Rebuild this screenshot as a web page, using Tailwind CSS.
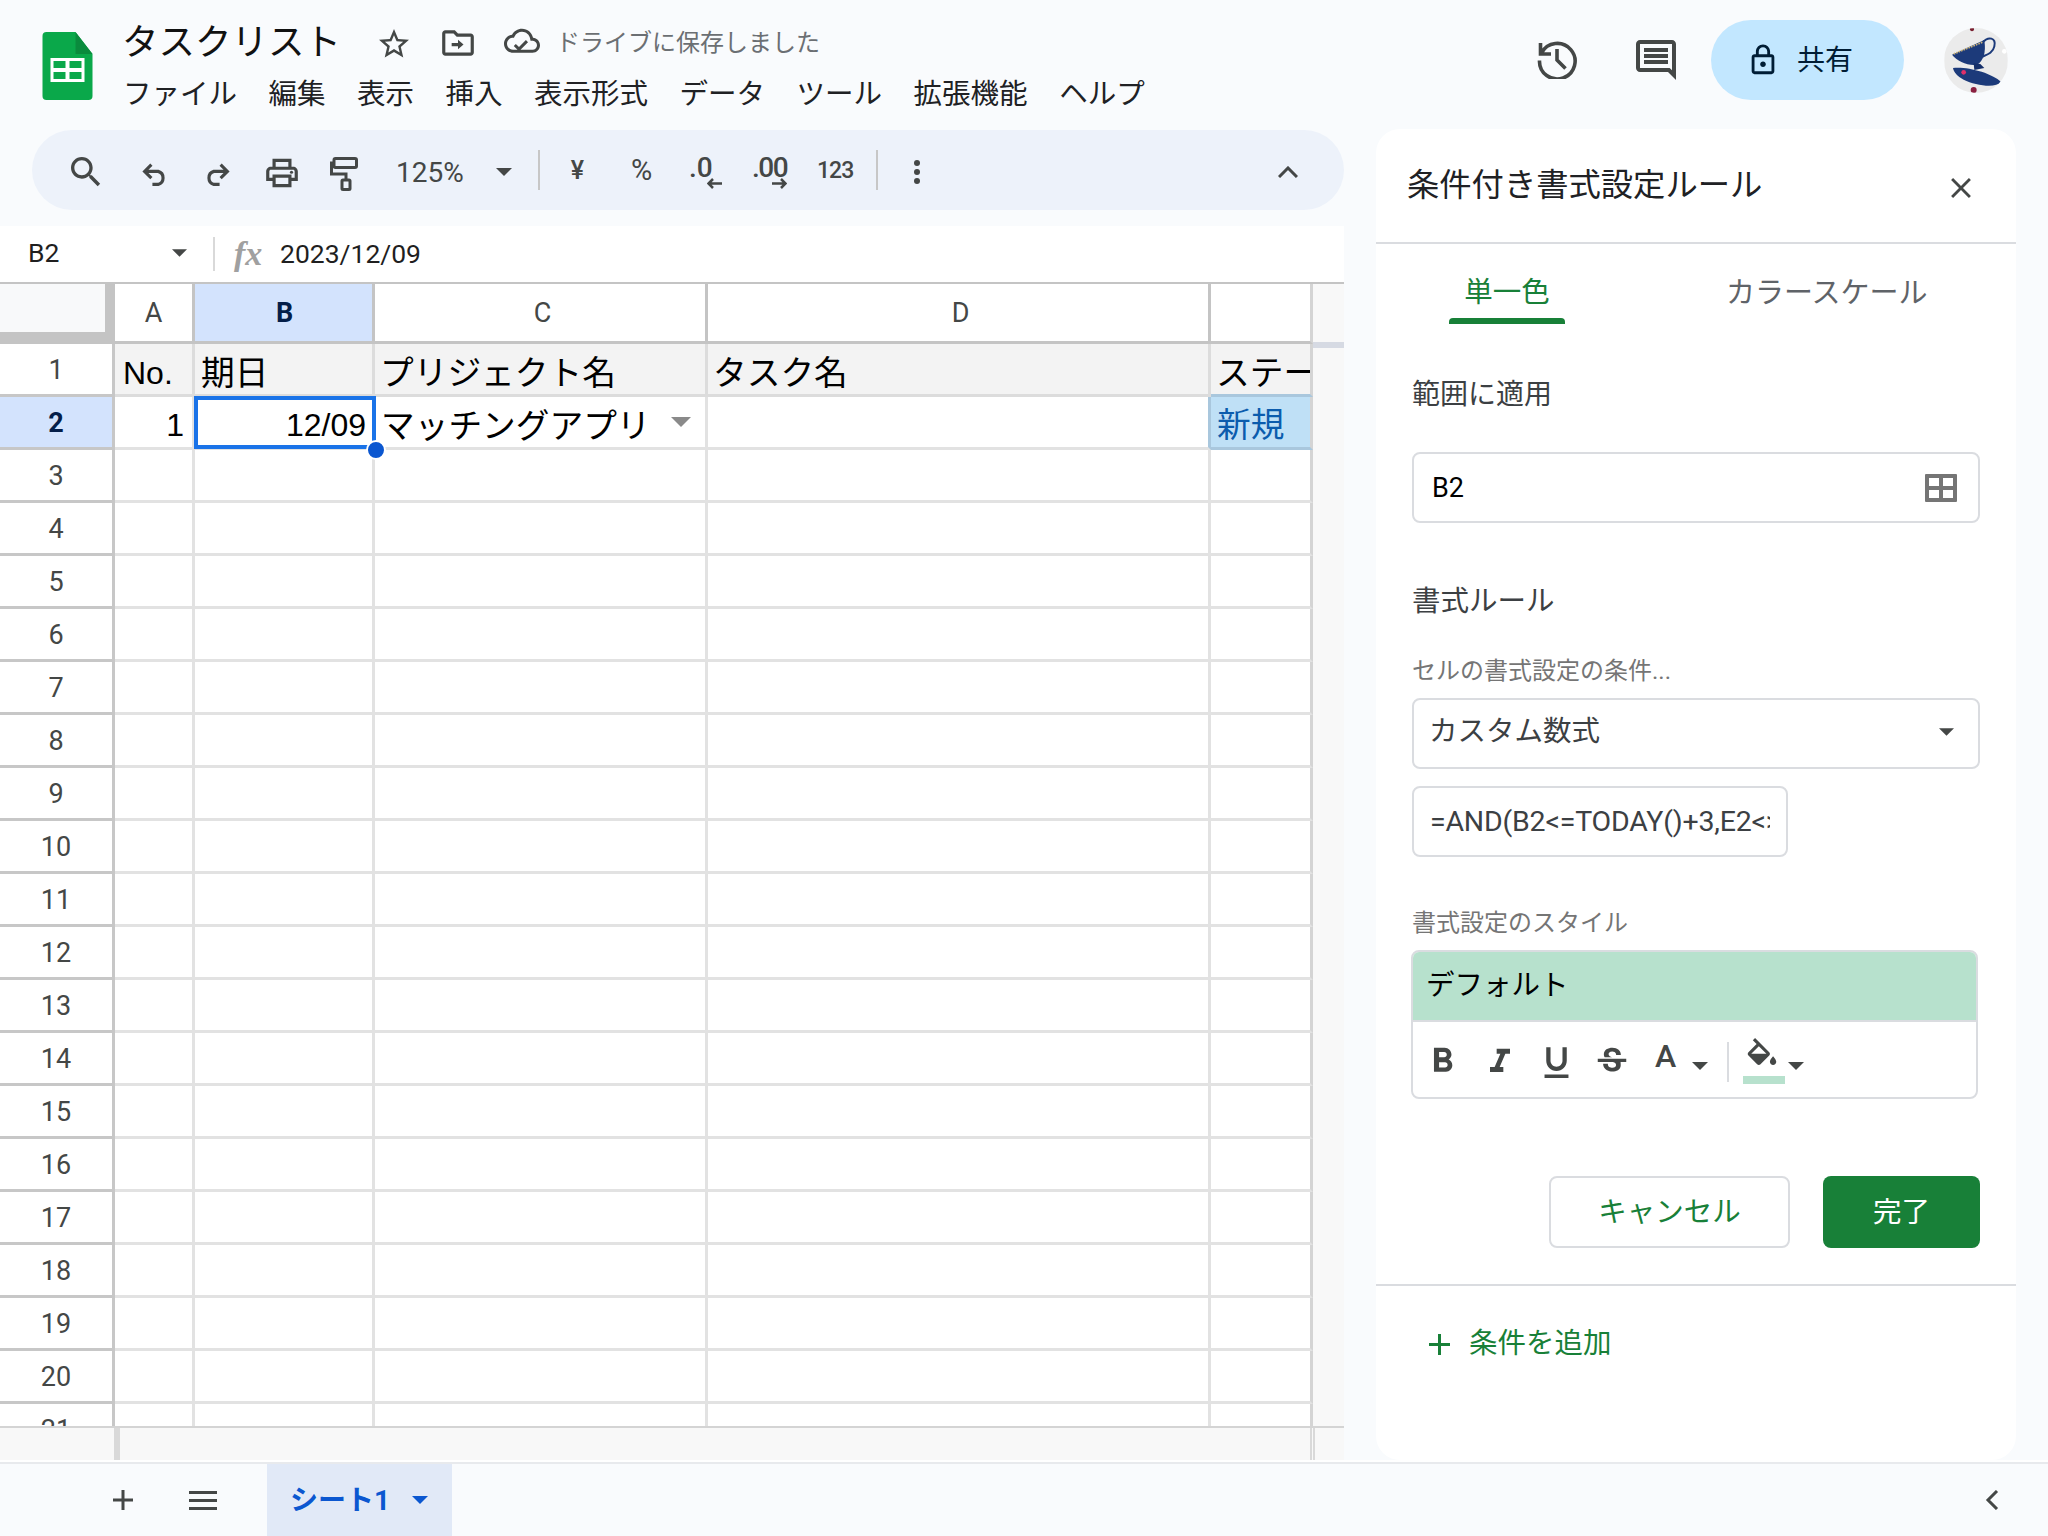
<!DOCTYPE html>
<html lang="ja">
<head>
    <meta charset="UTF-8">
    <title>タスクリスト - Google スプレッドシート</title>
    <script src="https://cdn.jsdelivr.net/npm/@tailwindcss/browser@4"></script>
</head>
<body class="w-[2048px] h-[1536px] overflow-hidden bg-[#f9fbfd] text-[#1f1f1f] [font-family:Roboto,'Noto_Sans_CJK_JP',sans-serif]">

    <!-- Header -->
    <header class="h-[130px] flex">
        <svg class="ml-[42px] mt-[32px] w-[51px] h-[68px]" viewBox="0 0 50 68">
            <path fill="#0aa84a" d="M4 0H33L50 22V64a4 4 0 0 1-4 4H4a4 4 0 0 1-4-4V4a4 4 0 0 1 4-4z"/>
            <path fill="#0a8b3d" d="M33 0L50 22H33z"/>
            <path fill="#fff" d="M8 26H42V50H8zM11 29V36H23V29zM27 29V36H39V29zM11 40V47H23V40zM27 40V47H39V40z" fill-rule="evenodd"/>
        </svg>
        <div class="ml-[29px] pt-[19px]">
            <div class="flex items-center h-[44px]">
                <span class="text-[36.5px] leading-[44px] mt-[3px] text-[#111]">タスクリスト</span>
                <svg class="ml-[35px] mt-[5px] w-[36px] h-[36px]" viewBox="0 0 24 24" fill="#444746"><path d="M22 9.24l-7.19-.62L12 2 9.19 8.63 2 9.24l5.46 4.73L5.82 21 12 17.27 18.18 21l-1.63-7.03L22 9.24zM12 15.4l-3.76 2.27 1-4.28-3.32-2.88 4.38-.38L12 6.1l1.71 4.04 4.38.38-3.32 2.88 1 4.28L12 15.4z"/></svg>
                <svg class="ml-[27px] mt-[3px] w-[38px] h-[38px]" viewBox="0 0 24 24" fill="#444746"><path d="M20 6h-8l-2-2H4c-1.1 0-2 .9-2 2v12c0 1.1.9 2 2 2h16c1.1 0 2-.9 2-2V8c0-1.1-.9-2-2-2zm0 12H4V6h5.17l2 2H20v10zM12 16v-2H8v-2h4v-2l3.5 3z"/></svg>
                <svg class="ml-[27px] mt-[3px] w-[36px] h-[36px]" viewBox="0 0 24 24" fill="#444746"><path d="M19.35 10.04C18.67 6.59 15.64 4 12 4 9.11 4 6.6 5.64 5.35 8.04 2.34 8.36 0 10.91 0 14c0 3.31 2.69 6 6 6h13c2.76 0 5-2.24 5-5 0-2.64-2.05-4.78-4.65-4.96zM19 18H6c-2.21 0-4-1.79-4-4 0-2.05 1.53-3.76 3.56-3.97l1.07-.11.5-.95C8.08 7.14 9.94 6 12 6c2.62 0 4.88 1.86 5.39 4.43l.3 1.5 1.53.11c1.56.1 2.78 1.41 2.78 2.96 0 1.65-1.35 3-3 3zm-9-1.82l-2.09-2.09L6.5 15.5 10 19l6.01-6.01-1.41-1.41z" transform="translate(0 -1.5)"/></svg>
                <span class="ml-[16px] mt-[3px] text-[24px] leading-[32px] text-[#6b6f73]">ドライブに保存しました</span>
            </div>
            <nav class="mt-[14px] flex gap-[31.5px] pl-[1px] text-[28.5px] leading-[36px] text-[#202124]">
                <a href="#">ファイル</a>
                <a href="#">編集</a>
                <a href="#">表示</a>
                <a href="#">挿入</a>
                <a href="#">表示形式</a>
                <a href="#">データ</a>
                <a href="#">ツール</a>
                <a href="#">拡張機能</a>
                <a href="#">ヘルプ</a>
            </nav>
        </div>
        <div class="ml-auto pr-[40px] flex items-center h-[120px]">
            <svg class="mt-[-2px] w-[40px] h-[40px]" viewBox="0 0 40 40" fill="none" stroke="#444746" stroke-width="3.6">
                <path d="M3.5 4V15H14M4.5 14A17.8 17.8 0 1 1 2.5 21.5"/>
                <path d="M20 10V21L28.5 29.5"/>
            </svg>
            <svg class="ml-[55px] w-[48px] h-[48px]" viewBox="0 0 24 24" fill="#444746"><path d="M21.99 4c0-1.1-.89-2-1.99-2H4c-1.1 0-2 .9-2 2v12c0 1.1.9 2 2 2h14l4 4-.01-18zM20 4v13.17L18.83 16H4V4h16zM6 12h12v2H6zm0-3h12v2H6zm0-3h12v2H6z"/></svg>
            <button class="ml-[31px] w-[193px] h-[80px] rounded-full bg-[#c2e7ff] flex items-center pl-[35px] text-[#001d35]">
                <svg class="w-[34px] h-[34px]" viewBox="0 0 24 24" fill="#001d35"><path d="M18 8h-1V6c0-2.76-2.24-5-5-5S7 3.24 7 6v2H6c-1.1 0-2 .9-2 2v10c0 1.1.9 2 2 2h12c1.1 0 2-.9 2-2V10c0-1.1-.9-2-2-2zM9 6c0-1.66 1.34-3 3-3s3 1.34 3 3v2H9V6zm9 14H6V10h12v10zm-6-3c1.1 0 2-.9 2-2s-.9-2-2-2-2 .9-2 2 .9 2 2 2z"/></svg>
                <span class="ml-[17px] mt-[2px] text-[28px] leading-[36px]">共有</span>
            </button>
            <svg class="ml-[40px] w-[64px] h-[65px] rounded-full" viewBox="72 50 190 195">
                <rect x="72" y="50" width="190" height="195" fill="#ebebeb"/>
                <path d="M185 95C205 72 228 80 222 105C218 125 200 130 186 136" fill="none" stroke="#1c3a7a" stroke-width="6"/>
                <path d="M95 130L192 86C198 125 188 150 170 160C145 165 110 150 95 130Z" fill="#1c3a7a"/>
                <path d="M100 128L188 92" stroke="#c9b27a" stroke-width="5" stroke-dasharray="5 3"/>
                <path d="M160 156L180 158L192 170L162 176Z" fill="#16306a"/>
                <path d="M98 170C140 165 215 185 242 212C225 232 165 222 130 205C110 195 100 182 98 170Z" fill="#1c3a7a"/>
                <circle cx="130" cy="183" r="7" fill="#e0306a"/>
                <circle cx="160" cy="236" r="9" fill="#8a2040"/>
                <circle cx="155" cy="54" r="6" fill="#7a2030"/>
                <circle cx="252" cy="120" r="7" fill="#fff"/>
            </svg>
        </div>
    </header>

    <!-- Main -->
    <div class="flex h-[1330px]">
        <div class="w-[1344px] shrink-0">

            <!-- Toolbar -->
            <div class="ml-[32px] h-[80px] rounded-[40px] bg-[#edf2fa] flex items-center pl-[34px] text-[#444746]">
                <svg class="mt-[4px] w-[40px] h-[40px]" viewBox="0 0 24 24" fill="#444746"><path d="M15.5 14h-.79l-.28-.27C15.41 12.59 16 11.11 16 9.5 16 5.91 13.09 3 9.5 3S3 5.91 3 9.5 5.91 16 9.5 16c1.61 0 3.09-.59 4.23-1.57l.27.28v.79l5 4.99L20.49 19l-4.99-5zm-6 0C7.01 14 5 11.99 5 9.5S7.01 5 9.5 5 14 7.01 14 9.5 11.99 14 9.5 14z"/></svg>
                <svg class="ml-[36px] mt-[8px] w-[25px] h-[23px]" viewBox="0 0 24 22" fill="none" stroke="#444746" stroke-width="3"><path d="M9 1.5L2.5 8L9 14.5M3 8H15.5A6.5 6.5 0 0 1 15.5 20.5H10"/></svg>
                <svg class="ml-[38px] mt-[8px] w-[25px] h-[23px]" viewBox="0 0 24 22" fill="none" stroke="#444746" stroke-width="3"><path d="M15 1.5L21.5 8L15 14.5M21 8H8.5A6.5 6.5 0 0 0 8.5 20.5H14"/></svg>
                <svg class="ml-[33px] mt-[6px] w-[38px] h-[38px]" viewBox="0 0 24 24" fill="#444746"><path d="M19 8h-1V3H6v5H5c-1.66 0-3 1.34-3 3v6h4v4h12v-4h4v-6c0-1.66-1.34-3-3-3zM8 5h8v3H8V5zm8 14H8v-4h8v4zm2-4v-2H6v2H4v-4c0-.55.45-1 1-1h14c.55 0 1 .45 1 1v4h-2z"/><circle cx="18" cy="11.5" r="1"/></svg>
                <svg class="ml-[29px] mt-[8px] w-[28px] h-[34px]" viewBox="0 0 28 34" fill="none" stroke="#444746" stroke-width="3"><rect x="4" y="1.5" width="22.500" height="9" rx="1.5"/><path d="M4 6H1.500V17H16V23"/><rect x="12" y="23" width="8" height="9.500" rx="1"/></svg>
                <span class="ml-[38px] w-[67px] text-[28px] leading-[36px] mt-[6px]">125%</span>
                <svg class="ml-[33px] mt-[4px] w-[16px] h-[8px]" viewBox="0 0 16 8" fill="#444746"><path d="M0 0H16L8 8z"/></svg>
                <div class="ml-[26px] w-[2px] h-[40px] bg-[#c7c7c7]"></div>
                <span class="ml-[30px] w-[15px] text-center text-[25px] font-medium mt-[2px]">¥</span>
                <span class="ml-[43px] w-[27px] text-center text-[29px] font-normal mt-[2px]">%</span>
                <div class="relative ml-[34px] w-[33px] h-[32px] mt-[5px]">
                    <span class="block text-[28px] leading-[24px] font-medium mt-[-1px]">.0</span>
                    <svg class="absolute right-0 bottom-0 w-[15px] h-[11px]" viewBox="0 0 15 11" fill="none" stroke="#444746" stroke-width="2.500"><path d="M6 1L1.500 5.500L6 10M2 5.500H15"/></svg>
                </div>
                <div class="relative ml-[31px] w-[34px] h-[32px] mt-[5px]">
                    <span class="block text-[28px] leading-[24px] font-medium tracking-[-1.5px] mt-[-1px] ml-[-1px]">.00</span>
                    <svg class="absolute right-0 bottom-0 w-[15px] h-[11px]" viewBox="0 0 15 11" fill="none" stroke="#444746" stroke-width="2.500"><path d="M9 1L13.500 5.500L9 10M13 5.500H0"/></svg>
                </div>
                <span class="ml-[30px] w-[36px] text-[23px] font-medium mt-[2px] tracking-[-1px] whitespace-nowrap">123</span>
                <div class="ml-[23px] w-[2px] h-[40px] bg-[#c7c7c7]"></div>
                <div class="ml-[36px] mt-[4px] flex flex-col gap-[3px]">
                    <i class="block w-[6px] h-[6px] rounded-full bg-[#444746]"></i>
                    <i class="block w-[6px] h-[6px] rounded-full bg-[#444746]"></i>
                    <i class="block w-[6px] h-[6px] rounded-full bg-[#444746]"></i>
                </div>
                <svg class="ml-auto mr-[46px] mt-[3px] w-[20px] h-[12px]" viewBox="0 0 20 12" fill="none" stroke="#444746" stroke-width="3"><path d="M1 11L10 2L19 11"/></svg>
            </div>

            <!-- Formula bar -->
            <div class="mt-[16px] h-[56px] bg-white flex items-center">
                <span class="ml-[28px] mt-[-2px] w-[144px] text-[26.500px] text-[#1f1f1f]">B2</span>
                <svg class="mt-[-2px] w-[15px] h-[8px]" viewBox="0 0 16 8" fill="#444746"><path d="M0 0H16L8 8z"/></svg>
                <div class="ml-[26px] w-[2px] h-[34px] bg-[#d9d9d9]"></div>
                <span class="ml-[19px] w-[46px] text-[34px] leading-[36px] italic font-bold text-[#a0a0a0] [font-family:'Liberation_Serif',serif]">fx</span>
                <span class="mt-[-1px] text-[26.500px] text-[#1f1f1f]">2023/12/09</span>
            </div>

            <!-- Grid -->
            <div class="flex h-[1146px]">
                <div id="rows" class="w-[1313px] bg-white border-t-2 border-b-2 border-t-[#c4c4c4] border-b-[#d4d4d4] overflow-hidden">
                    <!-- Column letters -->
                    <div class="flex h-[60px] text-[27px] text-[#444746]">
                        <div class="w-[115px] bg-[#c4c4c4] pr-[10px] pb-[12px]"><div class="h-full bg-[#f8f9fa]"></div></div>
                        <div class="w-[80px] flex items-center justify-center pt-[2px] border-r-[3px] border-b-[3px] border-[#c4c4c4]">A</div>
                        <div class="w-[180px] flex items-center justify-center pl-[2px] pt-[2px] border-r-[3px] border-b-[3px] border-[#c4c4c4] bg-[#d3e3fd] font-bold text-[#041e49]">B</div>
                        <div class="w-[333px] flex items-center justify-center pl-[5px] pt-[2px] border-r-[3px] border-b-[3px] border-[#c4c4c4]">C</div>
                        <div class="w-[503px] flex items-center justify-center pl-[5px] pt-[2px] border-r-[3px] border-b-[3px] border-[#c4c4c4]">D</div>
                        <div class="w-[102px] border-r-[3px] border-b-[3px] border-[#c4c4c4] border-r-[#d4d4d4]"></div>
                    </div>
                    <!-- Row 1 -->
                    <div class="flex h-[53px] text-[33.700px] text-black [font-family:'Liberation_Sans','Noto_Sans_CJK_JP',sans-serif]">
                        <div class="w-[115px] flex items-center justify-center pt-[2px] border-r-[3px] border-b-[3px] border-[#c7c7c7] text-[27px] text-[#444746] [font-family:Roboto,sans-serif]">1</div>
                        <div class="w-[80px] flex items-center pl-[8px] pt-[8px] bg-[#f3f3f3] border-r-[3px] border-b-[3px] border-[#dcdcdc] text-[32px] whitespace-nowrap">No.</div>
                        <div class="w-[180px] flex items-center pl-[6px] pt-[8px] bg-[#f3f3f3] border-r-[3px] border-b-[3px] border-[#dcdcdc]">期日</div>
                        <div class="w-[333px] flex items-center pl-[5px] pt-[8px] bg-[#f3f3f3] border-r-[3px] border-b-[3px] border-[#dcdcdc] whitespace-nowrap">プリジェクト名</div>
                        <div class="w-[503px] flex items-center pl-[5px] pt-[8px] bg-[#f3f3f3] border-r-[3px] border-b-[3px] border-[#dcdcdc] whitespace-nowrap">タスク名</div>
                        <div class="w-[102px] flex items-center pl-[5px] pt-[8px] bg-[#f3f3f3] border-r-[3px] border-b-[3px] border-r-[#d4d4d4] border-b-[#a9c7dd] overflow-hidden whitespace-nowrap">ステータス</div>
                    </div>
                    <!-- Row 2 -->
                    <div class="flex h-[53px] text-[33.700px] text-black [font-family:'Liberation_Sans','Noto_Sans_CJK_JP',sans-serif]">
                        <div class="w-[115px] flex items-center justify-center pt-[2px] border-r-[3px] border-b-[3px] border-[#c7c7c7] bg-[#d3e3fd] text-[27px] font-bold text-[#041e49] [font-family:Roboto,sans-serif]">2</div>
                        <div class="w-[80px] flex items-center justify-end pr-[8px] pt-[6px] border-r-[3px] border-b-[3px] border-[#e2e2e2] text-[32px]">1</div>
                        <div class="relative w-[180px] flex items-center justify-end pr-[6px] pt-[6px] border-r-[3px] border-b-[3px] border-[#e2e2e2] text-[32px]">
                            12/09
                            <div class="absolute left-[-1px] top-[-1px] w-[182px] h-[53px] border-4 border-[#1a73e8] z-10"></div>
                            <div class="absolute left-[171px] top-[43px] w-[20px] h-[20px] rounded-full bg-[#0b57d0] border-2 border-white z-20"></div>
                        </div>
                        <div class="w-[333px] flex items-center pl-[6px] pt-[8px] border-r-[3px] border-b-[3px] border-[#e2e2e2] whitespace-nowrap">
                            マッチングアプリ
                            <svg class="absolute ml-[290px] mt-[-8px] w-[20px] h-[10px]" viewBox="0 0 16 8" fill="#8a8a8a"><path d="M0 0H16L8 8z"/></svg>
                        </div>
                        <div class="w-[503px] border-r-[3px] border-b-[3px] border-[#e2e2e2] border-r-[#a9c7dd]"></div>
                        <div class="w-[102px] flex items-center pl-[6px] pt-[7px] bg-[#bfe0f6] border-r-[3px] border-b-[3px] border-r-[#d4d4d4] border-b-[#a9c7dd] text-[#0b5cad] whitespace-nowrap">新規</div>
                    </div>
                </div>
                <!-- Right gutter -->
                <div class="w-[31px] border-t-2 border-t-[#c4c4c4] border-b-2 border-b-[#d4d4d4] bg-[#f8f8f8] pt-[58px]">
                    <div class="h-[6px] bg-[#d6dae3]"></div>
                </div>
            </div>

            <!-- Horizontal scroll gutter -->
            <div class="h-[32px] bg-[#f8f8f8] flex justify-between">
                <div class="ml-[114px] w-[6px] bg-[#d9d9d9]"></div>
                <div class="mr-[29px] w-[5px] border-x-2 border-[#d9d9d9]"></div>
            </div>
        </div>

        <!-- Side panel -->
        <aside class="ml-[32px] mt-[-1px] w-[640px] h-[1331px] bg-white rounded-[24px] text-[28.500px] leading-[36px]">
            <div class="h-[115px] pb-[9px] border-b-2 border-[#dadce0] flex items-center justify-between pl-[31px] pr-[38px]">
                <h2 class="mt-[8px] text-[32.300px] leading-[40px] text-[#202124]">条件付き書式設定ルール</h2>
                <svg class="mt-[13px] w-[34px] h-[34px]" viewBox="0 0 24 24" fill="#444746"><path d="M19 6.41L17.59 5 12 10.59 6.41 5 5 6.41 10.59 12 5 17.59 6.41 19 12 13.41 17.59 19 19 17.59 13.41 12z"/></svg>
            </div>

            <div class="h-[80px] flex pl-[73px]">
                <div class="w-[116px] pt-[31px] text-center text-[#188038]">
                    単一色
                    <div class="mt-[7px] h-[6px] rounded-t-[4px] bg-[#188038]"></div>
                </div>
                <div class="ml-[161px] pt-[31px] text-[29px] text-[#5f6368] whitespace-nowrap">カラースケール</div>
            </div>

            <div class="pl-[36px]">
                <div class="mt-[53px] text-[28px] text-[#3c4043]">範囲に適用</div>
                <div class="mt-[39px] w-[568px] h-[71px] rounded-[8px] border-2 border-[#dadce0] flex items-center justify-between pl-[18px] pr-[21px]">
                    <span class="text-[27px] text-black">B2</span>
                    <svg class="w-[32px] h-[28px]" viewBox="0 0 32 28" fill="#757575"><path fill-rule="evenodd" d="M1 0H31A1 1 0 0 1 32 1V27A1 1 0 0 1 31 28H1A1 1 0 0 1 0 27V1A1 1 0 0 1 1 0ZM4 4V12H14V4ZM18 4V12H28V4ZM4 16V24H14V16ZM18 16V24H28V16Z"/></svg>
                </div>

                <div class="mt-[61px] text-[#3c4043]">書式ルール</div>
                <div class="mt-[35px] text-[24px] leading-[32px] text-[#757575]">セルの書式設定の条件...</div>
                <div class="mt-[11px] w-[568px] h-[71px] rounded-[8px] border-2 border-[#dadce0] flex items-center justify-between pl-[15px] pr-[24px]">
                    <span class="text-[#3c4043] mt-[-3px]">カスタム数式</span>
                    <svg class="w-[15px] h-[8px] mt-[-4px]" viewBox="0 0 16 8" fill="#444746"><path d="M0 0H16L8 8z"/></svg>
                </div>
                <div class="mt-[17px] w-[376px] h-[71px] rounded-[8px] border-2 border-[#dadce0] flex items-center pl-[16px]">
                    <span class="block w-[340px] overflow-hidden whitespace-nowrap text-[28.500px] tracking-[-0.2px] text-[#3c4043]">=AND(B2&lt;=TODAY()+3,E2&lt;&gt;"完了")</span>
                </div>

                <div class="mt-[50px] text-[24px] leading-[32px] text-[#757575]">書式設定のスタイル</div>
                <div class="mt-[11px] ml-[-1px] w-[567px] h-[149px] rounded-[8px] border-2 border-[#dadce0] overflow-hidden">
                    <div class="h-[70px] pl-[13px] flex items-center bg-[#b7e1cd] border-b-2 border-[#dadce0] text-black"><span>デフォルト</span></div>
                    <div class="flex items-center h-[75px] pl-[9px]">
                        <svg class="mt-[4px] w-[41px] h-[41px]" viewBox="0 0 24 24" fill="#444746"><path d="M15.6 10.79c.97-.67 1.65-1.77 1.65-2.79 0-2.26-1.75-4-4-4H7v14h7.04c2.09 0 3.71-1.7 3.71-3.79 0-1.52-.86-2.82-2.15-3.42zM10 6.5h3c.83 0 1.5.67 1.5 1.5s-.67 1.5-1.5 1.5h-3v-3zm3.5 9H10v-3h3.5c.83 0 1.5.67 1.5 1.5s-.67 1.5-1.5 1.5z"/></svg>
                        <svg class="ml-[17px] mt-[4px] w-[40px] h-[40px]" viewBox="0 0 24 24" fill="#444746"><path d="M10 4v3h2.21l-3.42 8H6v3h8v-3h-2.21l3.42-8H18V4z"/></svg>
                        <svg class="ml-[16px] mt-[6px] w-[41px] h-[41px]" viewBox="0 0 24 24" fill="#444746"><path d="M12 17c3.31 0 6-2.69 6-6V3h-2.5v8c0 1.93-1.57 3.500-3.500 3.500S8.500 12.930 8.500 11V3H6v8c0 3.310 2.690 6 6 6zm-7 2v2h14v-2H5z"/></svg>
                        <svg class="ml-[16px] mt-[4px] w-[38px] h-[38px]" viewBox="0 0 24 24" fill="#444746"><path d="M6.850 7.080C6.850 4.370 9.450 3 12.240 3c1.640 0 3 .49 3.900 1.280.77.65 1.460 1.730 1.460 3.240h-3.010c0-.31-.05-.59-.15-.85-.29-.86-1.200-1.280-2.250-1.280-1.860 0-2.340 1.020-2.340 1.700 0 .48.25.88.74 1.210.38.25.77.48 1.410.7H7.390c-.21-.34-.54-.89-.54-1.920zM21 12v-2H3v2h9.620c1.150.45 1.960.75 1.960 1.970 0 1-.81 1.670-2.280 1.670-1.540 0-2.930-.54-2.930-2.510H6.400c0 .55.080 1.130.24 1.580.81 2.290 3.220 3.330 5.670 3.330 2.340 0 5.200-1.150 5.200-4.040 0-.4-.02-.78-.09-1.980H21V12z"/></svg>
                        <span class="ml-[24px] mt-[-8px] w-[26px] text-[32px] leading-[36px] font-medium text-[#444746]">A</span>
                        <svg class="ml-[11px] mt-[12px] w-[16px] h-[8px]" viewBox="0 0 16 8" fill="#444746"><path d="M0 0H16L8 8z"/></svg>
                        <div class="ml-[19px] w-[2px] h-[40px] mt-[4px] bg-[#dadce0]"></div>
                        <div class="ml-[14px] w-[42px] flex flex-col mt-[4px]">
                            <svg class="mt-[-2px] w-[38px] h-[38px]" viewBox="0 0 24 24" fill="#444746"><path d="M16.560 8.940L7.620 0 6.210 1.410l2.380 2.380-5.150 5.150c-.59.59-.59 1.540 0 2.120l5.500 5.500c.29.29.68.44 1.060.44s.77-.15 1.060-.44l5.500-5.500c.59-.58.59-1.530 0-2.120zM5.210 10L10 5.210 14.790 10H5.210zM19 11.500s-2 2.170-2 3.500c0 1.100.9 2 2 2s2-.9 2-2c0-1.330-2-3.500-2-3.500z"/></svg>
                            <div class="h-[8px] bg-[#b7e1cd]"></div>
                        </div>
                        <svg class="ml-[3px] mt-[12px] w-[16px] h-[8px]" viewBox="0 0 16 8" fill="#444746"><path d="M0 0H16L8 8z"/></svg>
                    </div>
                </div>

                <div class="mt-[77px] ml-[137px] flex gap-[33px]">
                    <button class="w-[241px] h-[72px] rounded-[8px] border-2 border-[#dadce0] text-[#188038]"><span class="block mt-[2px]">キャンセル</span></button>
                    <button class="w-[157px] h-[72px] rounded-[8px] bg-[#188038] text-white"><span class="block mt-[2px]">完了</span></button>
                </div>
            </div>

            <div class="mt-[36px] h-[2px] bg-[#dadce0]"></div>
            <div class="mt-[40px] pl-[53px] flex items-center text-[#188038]">
                <svg class="w-[21px] h-[21px]" viewBox="0 0 21 21" fill="#188038"><path d="M9 0H12V9H21V12H12V21H9V12H0V9H9z"/></svg>
                <span class="ml-[19px]">条件を追加</span>
            </div>
        </aside>
    </div>

    <!-- Sheet tabs -->
    <div class="h-[2px] bg-white"></div>
    <footer class="h-[74px] border-t-2 border-[#e8eaed] flex items-center relative">
        <svg class="ml-[113px] w-[20px] h-[20px]" viewBox="0 0 20 20" fill="#444746"><path d="M8.500 0H11.500V8.500H20V11.500H11.500V20H8.500V11.500H0V8.500H8.500z"/></svg>
        <svg class="ml-[56px] w-[28px] h-[19px]" viewBox="0 0 28 19" fill="#444746"><path d="M0 0H28V3H0zM0 8H28V11H0zM0 16H28V19H0z"/></svg>
        <div class="ml-[50px] w-[185px] h-full bg-[#e1e9f7] flex items-center pl-[23px] text-[#0b57d0]">
            <span class="text-[28px] font-bold mt-[2px]">シート1</span>
            <svg class="ml-[22px] w-[16px] h-[8px]" viewBox="0 0 16 8" fill="#0b57d0"><path d="M0 0H16L8 8z"/></svg>
        </div>
        <svg class="ml-auto mr-[49px] w-[14px] h-[20px]" viewBox="0 0 14 20" fill="none" stroke="#444746" stroke-width="3"><path d="M12 1L3 10L12 19"/></svg>
    </footer>

    <script>
        // rows 3 to 21 are all empty, only the number changes
        const rows = document.getElementById("rows");
        for (let i = 3; i <= 21; i++) {
            rows.innerHTML += `
                <div class="flex h-[53px]">
                    <div class="w-[115px] flex items-center justify-center pt-[2px] border-r-[3px] border-b-[3px] border-[#c7c7c7] text-[27px] text-[#444746]">${i}</div>
                    <div class="w-[80px] border-r-[3px] border-b-[3px] border-[#e2e2e2]"></div>
                    <div class="w-[180px] border-r-[3px] border-b-[3px] border-[#e2e2e2]"></div>
                    <div class="w-[333px] border-r-[3px] border-b-[3px] border-[#e2e2e2]"></div>
                    <div class="w-[503px] border-r-[3px] border-b-[3px] border-[#e2e2e2]"></div>
                    <div class="w-[102px] border-r-[3px] border-b-[3px] border-[#e2e2e2] border-r-[#d4d4d4]"></div>
                </div>`;
        }
    </script>
</body>
</html>
